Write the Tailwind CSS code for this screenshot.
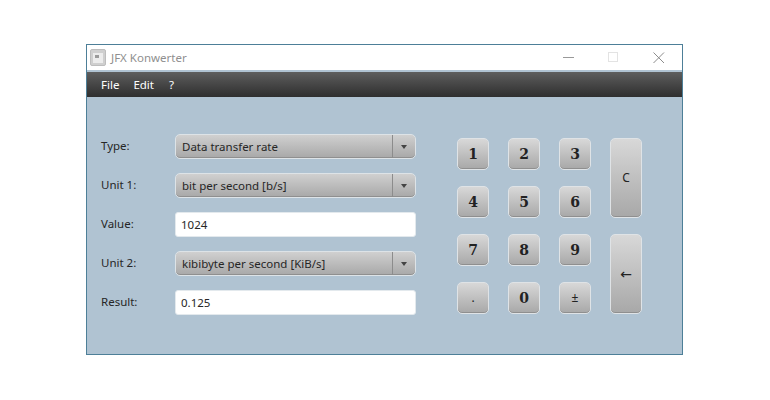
<!DOCTYPE html>
<html lang="en">

<head>
  <meta charset="UTF-8">
  <title>JFX Konwerter</title>
  <script src="https://cdn.jsdelivr.net/npm/@tailwindcss/browser@4"></script>
</head>

<body class="bg-white w-[770px] h-[400px] overflow-hidden font-['Noto_Sans',sans-serif] text-[11.5px] text-[#262626]">
  <div class="ml-[86px] mt-[44px] w-[597px] h-[311px] border border-[#4d7f98] flex flex-col">

    <!-- title bar -->
    <div class="h-[25px] bg-white flex items-center shrink-0">
      <div class="ml-[3px] w-[16px] h-[17px] rounded-[2px] border border-[#bdbdbd] bg-[#cfcfcf] flex items-center justify-center">
        <div class="w-[10px] h-[10px] bg-[#ececec] pl-[2px] pt-[2px]">
          <div class="w-[4px] h-[3px] bg-[#9a9a9a]"></div>
        </div>
      </div>
      <span class="ml-[5px] text-[#8f8f8f] leading-none">JFX Konwerter</span>
      <div class="ml-auto flex items-center">
        <svg width="46" height="25" viewBox="0 0 46 25"><path d="M19 12.5h11" stroke="#999" stroke-width="1"/></svg>
        <svg width="46" height="25" viewBox="0 0 46 25"><rect x="18.5" y="7.5" width="9" height="9" fill="none" stroke="#e3e3e3"/></svg>
        <svg width="46" height="25" viewBox="0 0 46 25"><path d="M17.5 7.5l10.5 10.5M28 7.5l-10.5 10.5" stroke="#8c8c8c" stroke-width="1"/></svg>
      </div>
    </div>

    <!-- menu -->
    <div class="h-[2px] bg-[#b0c3d2] shrink-0"></div>
    <div class="h-[25px] bg-gradient-to-b from-[#5e5e5e] to-[#2f2f2f] flex items-center gap-[14px] pl-[14px] text-white shrink-0">
      <span>File</span>
      <span>Edit</span>
      <span class="ml-[1px]">?</span>
    </div>

    <!-- content -->
    <div class="flex-1 bg-[#b0c3d2] flex pl-[14px]">
      <!-- form -->
      <div class="w-[356px] pt-[37px] flex flex-col gap-[14px]">
        <div class="flex items-center h-[25px]">
          <span class="w-[74px] -mt-[2px]">Type:</span>
          <div class="w-[241px] h-[25px] rounded-[5px] border border-[#dde3e7] shadow-[inset_0_-1px_0_#8f8f8f] bg-gradient-to-b from-[#d0d0d0] to-[#a8a8a8] flex items-center">
            <span class="flex-1 pl-[6px] truncate">Data transfer rate</span>
            <div class="w-[23px] h-full border-l border-[#8c8c8c] flex items-center justify-center">
              <div class="w-0 h-0 border-x-[3.5px] border-x-transparent border-t-[4px] border-t-[#444]"></div>
            </div>
          </div>
        </div>
        <div class="flex items-center h-[25px]">
          <span class="w-[74px] -mt-[2px]">Unit 1:</span>
          <div class="w-[241px] h-[25px] rounded-[5px] border border-[#dde3e7] shadow-[inset_0_-1px_0_#8f8f8f] bg-gradient-to-b from-[#d0d0d0] to-[#a8a8a8] flex items-center">
            <span class="flex-1 pl-[6px] truncate">bit per second [b/s]</span>
            <div class="w-[23px] h-full border-l border-[#8c8c8c] flex items-center justify-center">
              <div class="w-0 h-0 border-x-[3.5px] border-x-transparent border-t-[4px] border-t-[#444]"></div>
            </div>
          </div>
        </div>
        <div class="flex items-center h-[25px]">
          <span class="w-[74px] -mt-[2px]">Value:</span>
          <div class="w-[241px] h-[25px] rounded-[3px] border border-[#e3e9ed] bg-white flex items-center pl-[5px]">1024</div>
        </div>
        <div class="flex items-center h-[25px]">
          <span class="w-[74px] -mt-[2px]">Unit 2:</span>
          <div class="w-[241px] h-[25px] rounded-[5px] border border-[#dde3e7] shadow-[inset_0_-1px_0_#8f8f8f] bg-gradient-to-b from-[#d0d0d0] to-[#a8a8a8] flex items-center">
            <span class="flex-1 pl-[6px] truncate">kibibyte per second [KiB/s]</span>
            <div class="w-[23px] h-full border-l border-[#8c8c8c] flex items-center justify-center">
              <div class="w-0 h-0 border-x-[3.5px] border-x-transparent border-t-[4px] border-t-[#444]"></div>
            </div>
          </div>
        </div>
        <div class="flex items-center h-[25px]">
          <span class="w-[74px] -mt-[2px]">Result:</span>
          <div class="w-[241px] h-[25px] rounded-[3px] border border-[#e3e9ed] bg-white flex items-center pl-[5px]">0.125</div>
        </div>
      </div>

      <!-- keypad -->
      <div class="pt-[41px] grid grid-cols-[32px_32px_32px_32px] grid-rows-[32px_32px_32px_32px] gap-x-[19px] gap-y-[16px] font-['DejaVu_Serif',serif] font-bold text-[14px] text-[#222]">
        <div class="rounded-[5px] border border-[#dfe3e6] shadow-[inset_0_-1px_0_#8f8f8f] bg-gradient-to-b from-[#d8d8d8] to-[#a8a8a8] flex items-center justify-center">1</div>
        <div class="rounded-[5px] border border-[#dfe3e6] shadow-[inset_0_-1px_0_#8f8f8f] bg-gradient-to-b from-[#d8d8d8] to-[#a8a8a8] flex items-center justify-center">2</div>
        <div class="rounded-[5px] border border-[#dfe3e6] shadow-[inset_0_-1px_0_#8f8f8f] bg-gradient-to-b from-[#d8d8d8] to-[#a8a8a8] flex items-center justify-center">3</div>
        <div class="row-span-2 rounded-[5px] border border-[#dfe3e6] shadow-[inset_0_-1px_0_#8f8f8f] bg-gradient-to-b from-[#d8d8d8] to-[#a8a8a8] flex items-center justify-center font-['Noto_Sans',sans-serif] font-normal text-[12px]">C</div>
        <div class="rounded-[5px] border border-[#dfe3e6] shadow-[inset_0_-1px_0_#8f8f8f] bg-gradient-to-b from-[#d8d8d8] to-[#a8a8a8] flex items-center justify-center">4</div>
        <div class="rounded-[5px] border border-[#dfe3e6] shadow-[inset_0_-1px_0_#8f8f8f] bg-gradient-to-b from-[#d8d8d8] to-[#a8a8a8] flex items-center justify-center">5</div>
        <div class="rounded-[5px] border border-[#dfe3e6] shadow-[inset_0_-1px_0_#8f8f8f] bg-gradient-to-b from-[#d8d8d8] to-[#a8a8a8] flex items-center justify-center">6</div>
        <div class="rounded-[5px] border border-[#dfe3e6] shadow-[inset_0_-1px_0_#8f8f8f] bg-gradient-to-b from-[#d8d8d8] to-[#a8a8a8] flex items-center justify-center">7</div>
        <div class="rounded-[5px] border border-[#dfe3e6] shadow-[inset_0_-1px_0_#8f8f8f] bg-gradient-to-b from-[#d8d8d8] to-[#a8a8a8] flex items-center justify-center">8</div>
        <div class="rounded-[5px] border border-[#dfe3e6] shadow-[inset_0_-1px_0_#8f8f8f] bg-gradient-to-b from-[#d8d8d8] to-[#a8a8a8] flex items-center justify-center">9</div>
        <div class="row-span-2 rounded-[5px] border border-[#dfe3e6] shadow-[inset_0_-1px_0_#8f8f8f] bg-gradient-to-b from-[#d8d8d8] to-[#a8a8a8] flex items-center justify-center font-['DejaVu_Sans',sans-serif] font-normal text-[14px]">←</div>
        <div class="rounded-[5px] border border-[#dfe3e6] shadow-[inset_0_-1px_0_#8f8f8f] bg-gradient-to-b from-[#d8d8d8] to-[#a8a8a8] flex items-center justify-center font-['Noto_Sans',sans-serif] font-normal text-[12px]">.</div>
        <div class="rounded-[5px] border border-[#dfe3e6] shadow-[inset_0_-1px_0_#8f8f8f] bg-gradient-to-b from-[#d8d8d8] to-[#a8a8a8] flex items-center justify-center">0</div>
        <div class="rounded-[5px] border border-[#dfe3e6] shadow-[inset_0_-1px_0_#8f8f8f] bg-gradient-to-b from-[#d8d8d8] to-[#a8a8a8] flex items-center justify-center font-['Noto_Sans',sans-serif] font-normal text-[12px]">±</div>
      </div>
    </div>
  </div>
</body>

</html>
